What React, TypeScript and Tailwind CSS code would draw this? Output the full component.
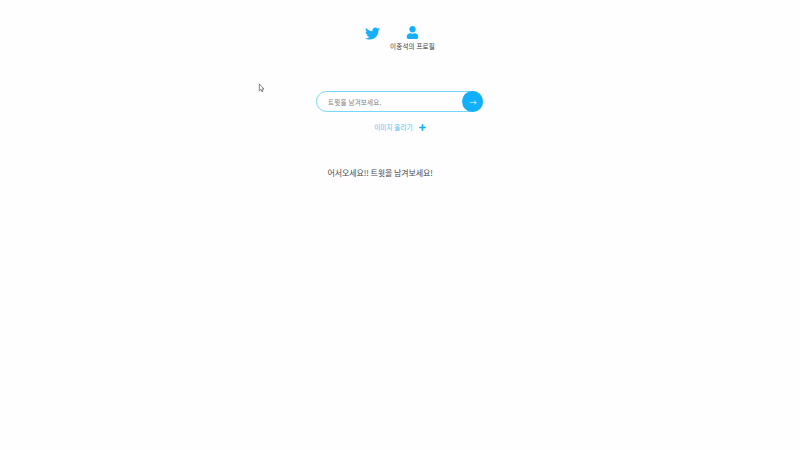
import { FaTwitter, FaUser } from "react-icons/fa";

export default function App() {
  return (
    <div className="relative h-[450px] w-[800px] overflow-hidden bg-[#fefdff] font-['Noto_Sans_CJK_KR','Noto_Sans',sans-serif]">
      <main className="ml-[316px] flex w-[168px] flex-col">
        <nav className="flex h-[91px] justify-center pt-[26px]">
          <a className="mr-[10px]">
            <FaTwitter size={15} color="#16aff9" />
          </a>
          <a className="flex w-[46px] flex-col items-center">
            <FaUser size={13} color="#16aff9" className="-ml-px" />
            <span className="mt-[3px] whitespace-nowrap text-[6.5px] leading-[9px] tracking-[0.2px] text-[#3a3a3a]">이종석의 프로필</span>
          </a>
        </nav>
        <form className="flex h-[21px] w-[167.4px] items-center justify-between rounded-full border border-[#74d8f6]">
          <span className="pl-[11px] pt-[1.5px] text-[6.5px] leading-[9px] tracking-[0.25px] text-[#808080]">트윗을 남겨보세요.</span>
          <span className="-mr-px flex size-[21px] items-center justify-center rounded-full bg-[#12b0fa] pt-px text-[7px] text-white">→</span>
        </form>
        <label className="mt-[10px] flex items-center justify-center gap-[6px] text-[6.5px] leading-[10px] tracking-[0.2px] text-[#4fbdf0]">
          <span>이미지 올리기</span>
          <svg width="7" height="7" viewBox="0 0 7 7">
            <path d="M3.5.9v5.2M.9 3.5h5.2" stroke="#16aff9" strokeWidth="1.7" strokeLinecap="round" />
          </svg>
        </label>
        <p className="ml-[11.5px] mt-[35px] whitespace-nowrap text-[8px] leading-[12px] tracking-[-0.1px] text-[#4a4a4a]">어서오세요!! 트윗을 남겨보세요!</p>
      </main>
      <svg className="absolute left-[258px] top-[83px]" width="7" height="10" viewBox="0 0 7 10">
        <path d="M1.3.9v7l1.6-1.5 1.1 2.4 1-.5-1.1-2.3H6z" fill="#fff" stroke="#666" strokeWidth=".8" />
      </svg>
    </div>
  );
}
